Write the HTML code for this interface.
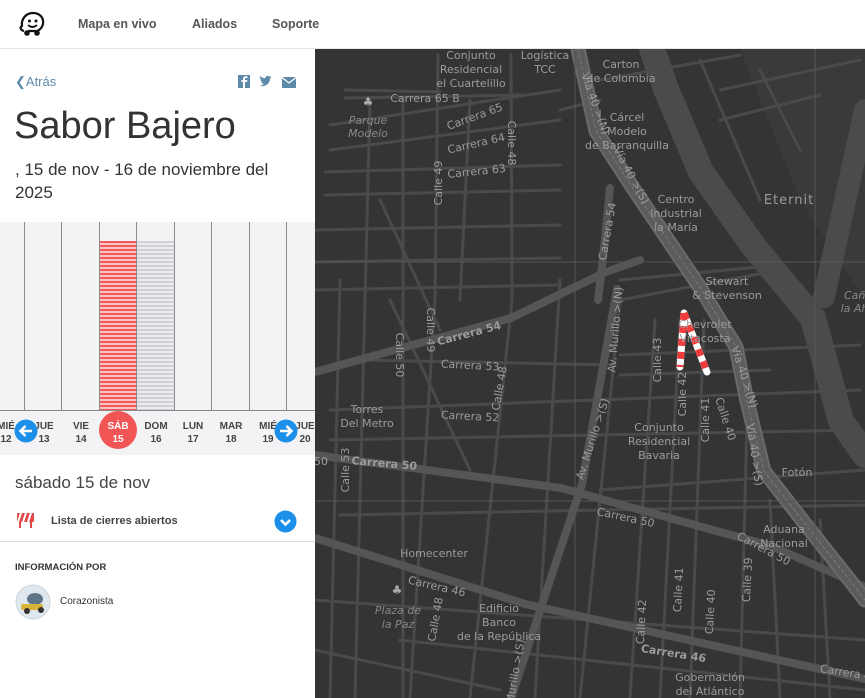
<!DOCTYPE html>
<html><head><meta charset="utf-8"><style>
*{margin:0;padding:0;box-sizing:border-box}
body{width:865px;height:698px;overflow:hidden;background:#fff;font-family:"Liberation Sans",Arial,sans-serif;position:relative;color:#333}
.hdr{position:absolute;left:0;top:0;width:865px;height:49px;border-bottom:1px solid #e6e6e6;background:#fff}
.nav{position:absolute;top:17px;font-size:12.5px;font-weight:bold;color:#555}
.panel{position:absolute;left:0;top:49px;width:315px;height:649px;background:#fff}
.map{position:absolute;left:315px;top:49px;width:550px;height:649px;background:#333}
.t{position:absolute;white-space:nowrap}
.chart{position:absolute;left:0;top:222px;width:315px;height:233px;background:#f3f3f6}
.vl{position:absolute;top:0;width:1px;height:188px;background:#8a8a8a}
.day{position:absolute;top:198px;width:40px;text-align:center;font-size:10px;font-weight:bold;color:#444;line-height:13px}
</style></head><body>
<div class="hdr">
<svg style="position:absolute;left:18px;top:11px" width="28" height="27" viewBox="0 0 28 27"><path d="M6 20 C2 19 2 16 4 15 C3 8 8 2 15 2 C22 2 26 7 25 13 C24 17 22 19 19 20 L10 20" fill="#fff" stroke="#111" stroke-width="2.2"/><circle cx="11.5" cy="10" r="1.5" fill="#111"/><circle cx="18" cy="10" r="1.5" fill="#111"/><path d="M10 14 Q14.5 18 19 14" fill="none" stroke="#111" stroke-width="1.8"/><circle cx="9" cy="22" r="2.8" fill="#111"/><circle cx="19" cy="22" r="2.8" fill="#111"/></svg>
<div class="nav" style="left:78px">Mapa en vivo</div>
<div class="nav" style="left:192px">Aliados</div>
<div class="nav" style="left:272px">Soporte</div>
</div>
<div class="panel"></div>
<div class="t" style="left:15px;top:74px;font-size:13px;color:#5d8aa8">❮Atrás</div>
<svg style="position:absolute;left:238px;top:75px" width="60" height="14"><rect x="0" y="0" width="12" height="13" fill="#5d8aa8"/><path d="M7 13 V7 H9 L9.4 5 H7 V4 C7 3.4 7.3 3 8 3 H9.5 V1.2 H7.8 C6 1.2 5 2.2 5 4 V5 H3.5 V7 H5 V13Z" fill="#fff"/><path d="M22 11 C27 12 32 9 32 3.5 L33.5 2 L32 2.3 L33 1 L31.3 1.6 C30 0.2 27.5 0.8 27.3 3.3 C25 3.2 23.5 2.3 22.3 1 C21.6 2.8 22.5 4.3 23.3 4.8 L22.5 4.6 C22.6 6 23.6 6.8 24.5 7 L23.3 7.1 C23.8 8.3 25 8.9 26 8.9 C25 9.8 23.5 10.6 22 11Z" fill="#5d8aa8"/><rect x="44" y="2" width="14" height="11" fill="#5d8aa8"/><path d="M44 2.5 L51 8 L58 2.5" fill="none" stroke="#fff" stroke-width="1.2"/></svg>
<div class="t" style="left:14px;top:105px;font-size:38px;color:#333">Sabor Bajero</div>
<div class="t" style="left:15px;top:158px;font-size:17px;line-height:23px;color:#333">, 15 de nov - 16 de noviembre del<br>2025</div>
<div class="chart">
<div class="vl" style="left:24px"></div><div class="vl" style="left:61px"></div><div class="vl" style="left:99px"></div><div class="vl" style="left:136px"></div><div class="vl" style="left:174px"></div><div class="vl" style="left:211px"></div><div class="vl" style="left:249px"></div><div class="vl" style="left:286px"></div>
<div style="position:absolute;left:100px;top:19px;width:36px;height:169px;background:repeating-linear-gradient(#f15b5b 0 2px,#f9c3c3 2px 4px)"></div>
<div style="position:absolute;left:137px;top:19px;width:37px;height:169px;background:repeating-linear-gradient(#cfd0d5 0 2px,#ececf0 2px 4px)"></div>
<div style="position:absolute;left:0;top:188px;width:315px;height:1px;background:#8a8a8a"></div>
<div class="day" style="left:-14px">MIÉ<br>12</div>
<div class="day" style="left:24px">JUE<br>13</div>
<div class="day" style="left:61px">VIE<br>14</div>
<div style="position:absolute;left:99px;top:189px;width:38px;height:38px;border-radius:50%;background:#f25555"></div>
<div class="day" style="left:98px;color:#fff">SÁB<br>15</div>
<div class="day" style="left:136px">DOM<br>16</div>
<div class="day" style="left:173px">LUN<br>17</div>
<div class="day" style="left:211px">MAR<br>18</div>
<div class="day" style="left:248px">MIÉ<br>19</div>
<div class="day" style="left:285px">JUE<br>20</div>
<svg style="position:absolute;left:14px;top:197px" width="24" height="24"><circle cx="12" cy="12" r="11.5" fill="#1c8fe8"/><path d="M18 12 H7 M11.5 7 L6.5 12 L11.5 17" fill="none" stroke="#fff" stroke-width="2.6"/></svg>
<svg style="position:absolute;left:274px;top:197px" width="24" height="24"><circle cx="12" cy="12" r="11.5" fill="#1c8fe8"/><path d="M6 12 H17 M12.5 7 L17.5 12 L12.5 17" fill="none" stroke="#fff" stroke-width="2.6"/></svg>
</div>
<div class="t" style="left:15px;top:473px;font-size:17px;color:#444">sábado 15 de nov</div>
<svg style="position:absolute;left:17px;top:513px" width="17" height="16"><rect x="0" y="0" width="17" height="9" rx="1" fill="#e04848"/><path d="M4 0 L1 9 M9 0 L6 9 M14 0 L11 9" stroke="#fff" stroke-width="2"/><rect x="2" y="9" width="2" height="6" fill="#e04848"/><rect x="13" y="9" width="2" height="6" fill="#e04848"/></svg>
<div class="t" style="left:51px;top:515px;font-size:11px;font-weight:bold;color:#444">Lista de cierres abiertos</div>
<svg style="position:absolute;left:274px;top:510px" width="23" height="23"><circle cx="11.5" cy="11.5" r="11" fill="#1c8fe8"/><path d="M7 10 L11.5 14.5 L16 10" fill="none" stroke="#fff" stroke-width="2.6"/></svg>
<div style="position:absolute;left:0;top:541px;width:315px;height:1px;background:#ddd"></div>
<div class="t" style="left:15px;top:562px;font-size:9.5px;font-weight:bold;color:#333">INFORMACIÓN POR</div>
<svg style="position:absolute;left:15px;top:584px" width="36" height="36"><circle cx="18" cy="18" r="17" fill="#dfe7ee" stroke="#cfd4d8"/><ellipse cx="20" cy="15" rx="8" ry="6" fill="#5f7587"/><rect x="6" y="20" width="22" height="6" rx="2" fill="#d9b43a"/><circle cx="12" cy="27" r="3" fill="#333"/><circle cx="26" cy="26" r="3" fill="#333"/></svg>
<div class="t" style="left:60px;top:596px;font-size:10px;color:#333">Corazonista</div>

<svg class="map" viewBox="315 49 550 649" width="550" height="649" style="position:absolute;left:315px;top:49px">
<rect x="315" y="49" width="550" height="649" fill="#343434"/>
<path d="M740 49 L865 49 L865 300 L800 200Z" fill="#3a3a3a"/>
<g fill="none" stroke-linecap="round" stroke-linejoin="round">
<path d="M652 49 L666 89 L701 172 L754 247 L813 318 L841 421 L865 455" stroke="#4b4b4b" stroke-width="26"/>
<path d="M865 110 L824 297" stroke="#4b4b4b" stroke-width="22"/>
<g stroke="#4a4a4a" stroke-width="3">
<path d="M345 90 L440 92 M345 98 L520 95 M330 125 L560 90 M330 150 L560 120 M325 172 L560 165 M325 195 L560 190 M315 230 L560 225 M315 262 L560 258 M315 290 L560 285 M620 280 L780 265 M620 300 L780 270 M620 355 L860 345 M620 375 L770 370 M360 360 L615 365 M330 410 L860 390 M330 440 L860 430 M600 490 L865 470 M340 515 L865 505 M315 600 L865 640 M400 640 L865 690 M315 650 L500 690 M600 80 L740 55 M720 90 L860 60 M720 120 L820 95 M560 110 L600 100"/>
<path d="M438 55 L435 300 L410 698 M511 55 L512 300 L470 698 M403 100 L403 698 M370 100 L355 698 M470 100 L460 300 M340 280 L330 698 M655 320 L630 698 M680 320 L660 698 M704 320 L690 698 M747 420 L740 698 M560 280 L535 698 M620 300 L580 698 M770 500 L780 698 M820 520 L830 698 M760 70 L800 150 M700 60 L760 200 M380 200 L440 330 M390 300 L470 470"/>
</g>
<g stroke="#555" stroke-width="8">
<path d="M315 372 L511 318 L606 272 L640 260"/>
<path d="M315 455 L561 488 L771 546 L865 587"/>
<path d="M315 538 L525 604 L865 679"/>
<path d="M617 289 L582 484 L511 698"/>
<path d="M610 188 L603 258 L598 300"/>
</g>
<path d="M578 49 L596 131 L631 185 L701 289 L736 347 L747 401 L764 471 L806 525 L852 583 L865 600" stroke="#6a6a6a" stroke-width="15"/>
<path d="M578 49 L596 131 L631 185 L701 289 L736 347 L747 401 L764 471 L806 525 L852 583 L865 600" stroke="#5c5c5c" stroke-width="11"/>
<path d="M578 49 L596 131 L631 185 L701 289 L736 347 L747 401 L764 471 L806 525 L852 583 L865 600" stroke="#7a7a7a" stroke-width="1" stroke-dasharray="3 3"/>
<path d="M575 49 V698 M815 49 V698 M315 262 H865 M315 501 H865" stroke="#555" stroke-width="1"/>
<path d="M684 313 L680 367 M684 313 L707 372" stroke="#fff" stroke-width="7"/>
<path d="M684 313 L680 367 M684 313 L707 372" stroke="#f03c3c" stroke-width="7" stroke-linecap="butt" stroke-dasharray="7 6"/>
</g>
<g font-family="DejaVu Sans,sans-serif" font-size="11" fill="#9c9c9c" text-anchor="middle">
<text x="471" y="59">Conjunto</text><text x="471" y="73">Residencial</text><text x="471" y="87">el Cuartelillo</text>
<text x="545" y="59">Logística</text><text x="545" y="73">TCC</text>
<text x="621" y="68">Carton</text><text x="621" y="82">de Colombia</text>
<text x="425" y="102">Carrera 65 B</text>
<text x="368" y="124" font-style="italic" fill="#888">Parque</text><text x="368" y="137" font-style="italic" fill="#888">Modelo</text>
<text transform="translate(476,120) rotate(-20)">Carrera 65</text>
<text transform="translate(477,147) rotate(-13)">Carrera 64</text>
<text transform="translate(477,175) rotate(-6)">Carrera 63</text>
<text transform="translate(508,143) rotate(90)">Calle 48</text>
<text transform="translate(442,183) rotate(-90)">Calle 49</text>
<text x="627" y="121">Cárcel</text><text x="627" y="135">Modelo</text><text x="627" y="149">de Barranquilla</text>
<text transform="translate(592,105) rotate(70)">Vía 40 &gt;(N)</text>
<text transform="translate(628,177) rotate(62)">Vía 40 &gt;(S)</text>
<text x="676" y="203">Centro</text><text x="676" y="217">Industrial</text><text x="676" y="231">la María</text>
<text x="789" y="204" font-size="13" letter-spacing="1">Eternit</text>
<text transform="translate(611,232) rotate(-80)">Carrera 54</text>
<text x="727" y="285">Stewart</text><text x="727" y="299">&amp; Stevenson</text>
<text x="705" y="328">Chevrolet</text><text x="705" y="342">Vitacosta</text>
<text x="858" y="299" font-style="italic" fill="#888">Caño</text><text x="858" y="312" font-style="italic" fill="#888">la Ahu</text>
<text transform="translate(470,337) rotate(-15)" font-weight="bold">Carrera 54</text>
<text transform="translate(470,369) rotate(3)">Carrera 53</text>
<text transform="translate(427,330) rotate(90)">Calle 49</text>
<text transform="translate(396,355) rotate(90)">Calle 50</text>
<text transform="translate(503,389) rotate(-80)">Calle 48</text>
<text transform="translate(619,330) rotate(-85)">Av. Murillo &gt;(N)</text>
<text transform="translate(661,360) rotate(-90)">Calle 43</text>
<text transform="translate(686,394) rotate(-90)">Calle 42</text>
<text transform="translate(709,420) rotate(-90)">Calle 41</text>
<text transform="translate(722,420) rotate(72)">Calle 40</text>
<text transform="translate(741,378) rotate(72)">Vía 40 &gt;(N)</text>
<text transform="translate(751,455) rotate(82)">Vía 40 &gt;(S)</text>
<text x="367" y="413">Torres</text><text x="367" y="427">Del Metro</text>
<text transform="translate(470,420) rotate(3)">Carrera 52</text>
<text x="659" y="431">Conjunto</text><text x="659" y="445">Residencial</text><text x="659" y="459">Bavaria</text>
<text transform="translate(596,440) rotate(-72)">Av. Murillo &gt;(S)</text>
<text transform="translate(384,467) rotate(5)" font-weight="bold">Carrera 50</text>
<text transform="translate(349,470) rotate(-90)">Calle 53</text>
<text x="321" y="465">50</text>
<text x="797" y="476">Fotón</text>
<text transform="translate(625,521) rotate(12)">Carrera 50</text>
<text x="784" y="533">Aduana</text><text x="784" y="547">Nacional</text>
<text transform="translate(762,552) rotate(28)">Carrera 50</text>
<text x="434" y="557">Homecenter</text>
<text transform="translate(436,590) rotate(13)">Carrera 46</text>
<text x="398" y="614" font-style="italic" fill="#888">Plaza de</text><text x="398" y="628" font-style="italic" fill="#888">la Paz</text>
<text x="499" y="612">Edificio</text><text x="499" y="626">Banco</text><text x="499" y="640">de la República</text>
<text transform="translate(439,620) rotate(-80)">Calle 48</text>
<text transform="translate(682,590) rotate(-87)">Calle 41</text>
<text transform="translate(751,580) rotate(-87)">Calle 39</text>
<text transform="translate(645,622) rotate(-87)">Calle 42</text>
<text transform="translate(714,612) rotate(-87)">Calle 40</text>
<text transform="translate(673,657) rotate(9)" font-weight="bold">Carrera 46</text>
<text x="710" y="681">Gobernación</text><text x="710" y="695">del Atlántico</text>
<text transform="translate(845,676) rotate(9)">Carrera 4</text>
<text transform="translate(519,672) rotate(-80)">Murillo &gt;(S)</text>
<text x="368" y="106" fill="#aaa" font-size="12">♣</text>
<text x="397" y="594" fill="#aaa" font-size="12">♣</text>
</g>
</svg>
</body></html>
